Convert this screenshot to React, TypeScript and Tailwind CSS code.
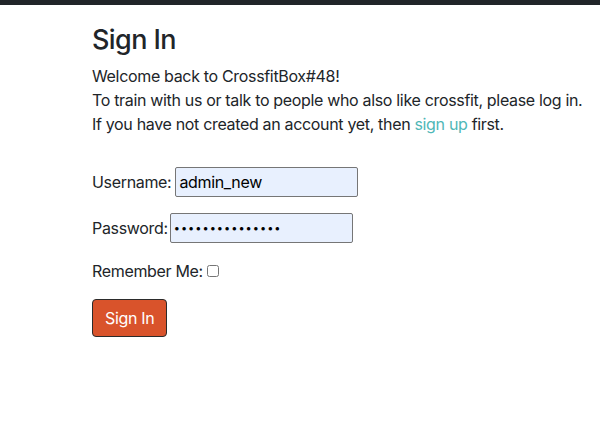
export default function App() {
  return (
    <div className="min-h-[432px] bg-white font-['Inter','Liberation_Sans',Arial,sans-serif] text-[#212529]">
      <div className="h-[5px] bg-[#212529]" />

      <main className="pl-[92px] pt-[17px]">
        <h2 className="text-[27px] font-medium leading-[36px] tracking-[-0.6px]">Sign In</h2>

        <div className="mt-[6px] whitespace-nowrap text-[16px] leading-[24px] tracking-[-0.33px]">
          <p>Welcome back to CrossfitBox#48!</p>
          <p>To train with us or talk to people who also like crossfit, please log in.</p>
          <p>
            If you have not created an account yet, then{' '}
            <a href="#" className="text-[#4fb7b7]">
              sign up
            </a>{' '}
            first.
          </p>
        </div>

        <form className="mt-[31px] flex flex-col items-start text-[16px] tracking-[-0.33px]">
          <p className="flex items-center gap-[4px]">
            <label htmlFor="username">Username:</label>
            <input
              id="username"
              type="text"
              defaultValue="admin_new"
              className="h-[30px] w-[183px] rounded-[2px] border border-[#767676] bg-[#e8f0fe] px-[3px] text-black outline-none"
            />
          </p>

          <p className="mt-[16px] flex items-center gap-[2px]">
            <label htmlFor="password">Password:</label>
            <input
              id="password"
              type="password"
              defaultValue="admin_password1"
              className="h-[30px] w-[183px] rounded-[2px] border border-[#767676] bg-[#e8f0fe] px-[3px] text-[11px] tracking-[1px] text-black outline-none"
            />
          </p>

          <p className="mt-[16px] flex items-center gap-[4px]">
            <label htmlFor="remember">Remember Me:</label>
            <input id="remember" type="checkbox" className="h-[12px] w-[12px]" />
          </p>

          <button
            type="submit"
            className="mt-[16px] h-[38px] rounded-[4px] border border-[#2b2b2b] bg-[#d9532b] px-[12px] text-[16px] text-white"
          >
            Sign In
          </button>
        </form>
      </main>
    </div>
  )
}
